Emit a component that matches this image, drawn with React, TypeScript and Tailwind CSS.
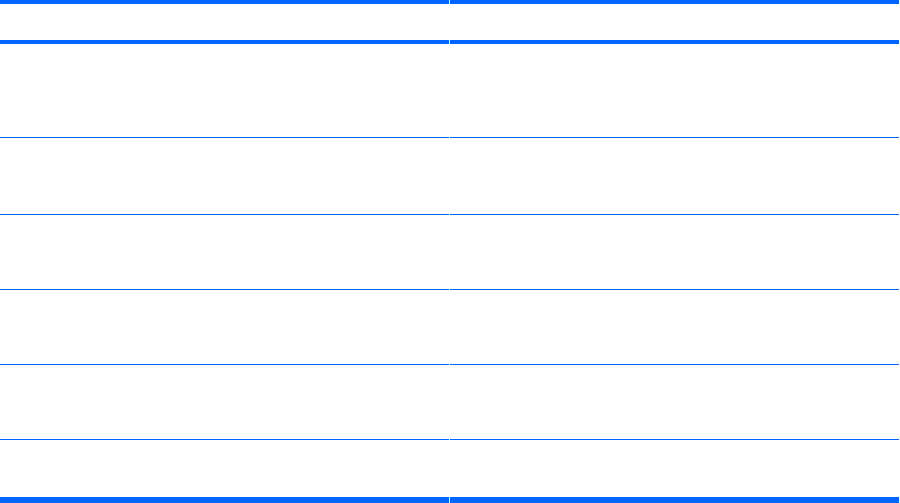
const rows = [
  { h: "h-[93px]", line: "border-b" },
  { h: "h-[76px]", line: "border-b" },
  { h: "h-[74px]", line: "border-b" },
  { h: "h-[74px]", line: "border-b" },
  { h: "h-[74px]", line: "border-b" },
  { h: "h-[57px]", line: "border-b-[6px]" },
];

export default function App() {
  return (
    <div className="w-[900px] h-[503px] bg-white overflow-hidden font-['Liberation_Sans',sans-serif]">
      <div className="w-[899px] flex flex-col">
        {/* header */}
        <div className="flex gap-px">
          <div className="w-[449px] h-[44px] border-t-4 border-b-4 border-[#0066ff]" />
          <div className="flex-1 h-[44px] border-t-4 border-b-4 border-[#0066ff]" />
        </div>
        {rows.map((r, i) => (
          <div key={i} className="flex gap-px">
            <div className={`w-[449px] ${r.h} box-content ${r.line} border-[#0066ff]`} />
            <div className={`flex-1 ${r.h} box-content ${r.line} border-[#0066ff]`} />
          </div>
        ))}
      </div>
    </div>
  );
}
